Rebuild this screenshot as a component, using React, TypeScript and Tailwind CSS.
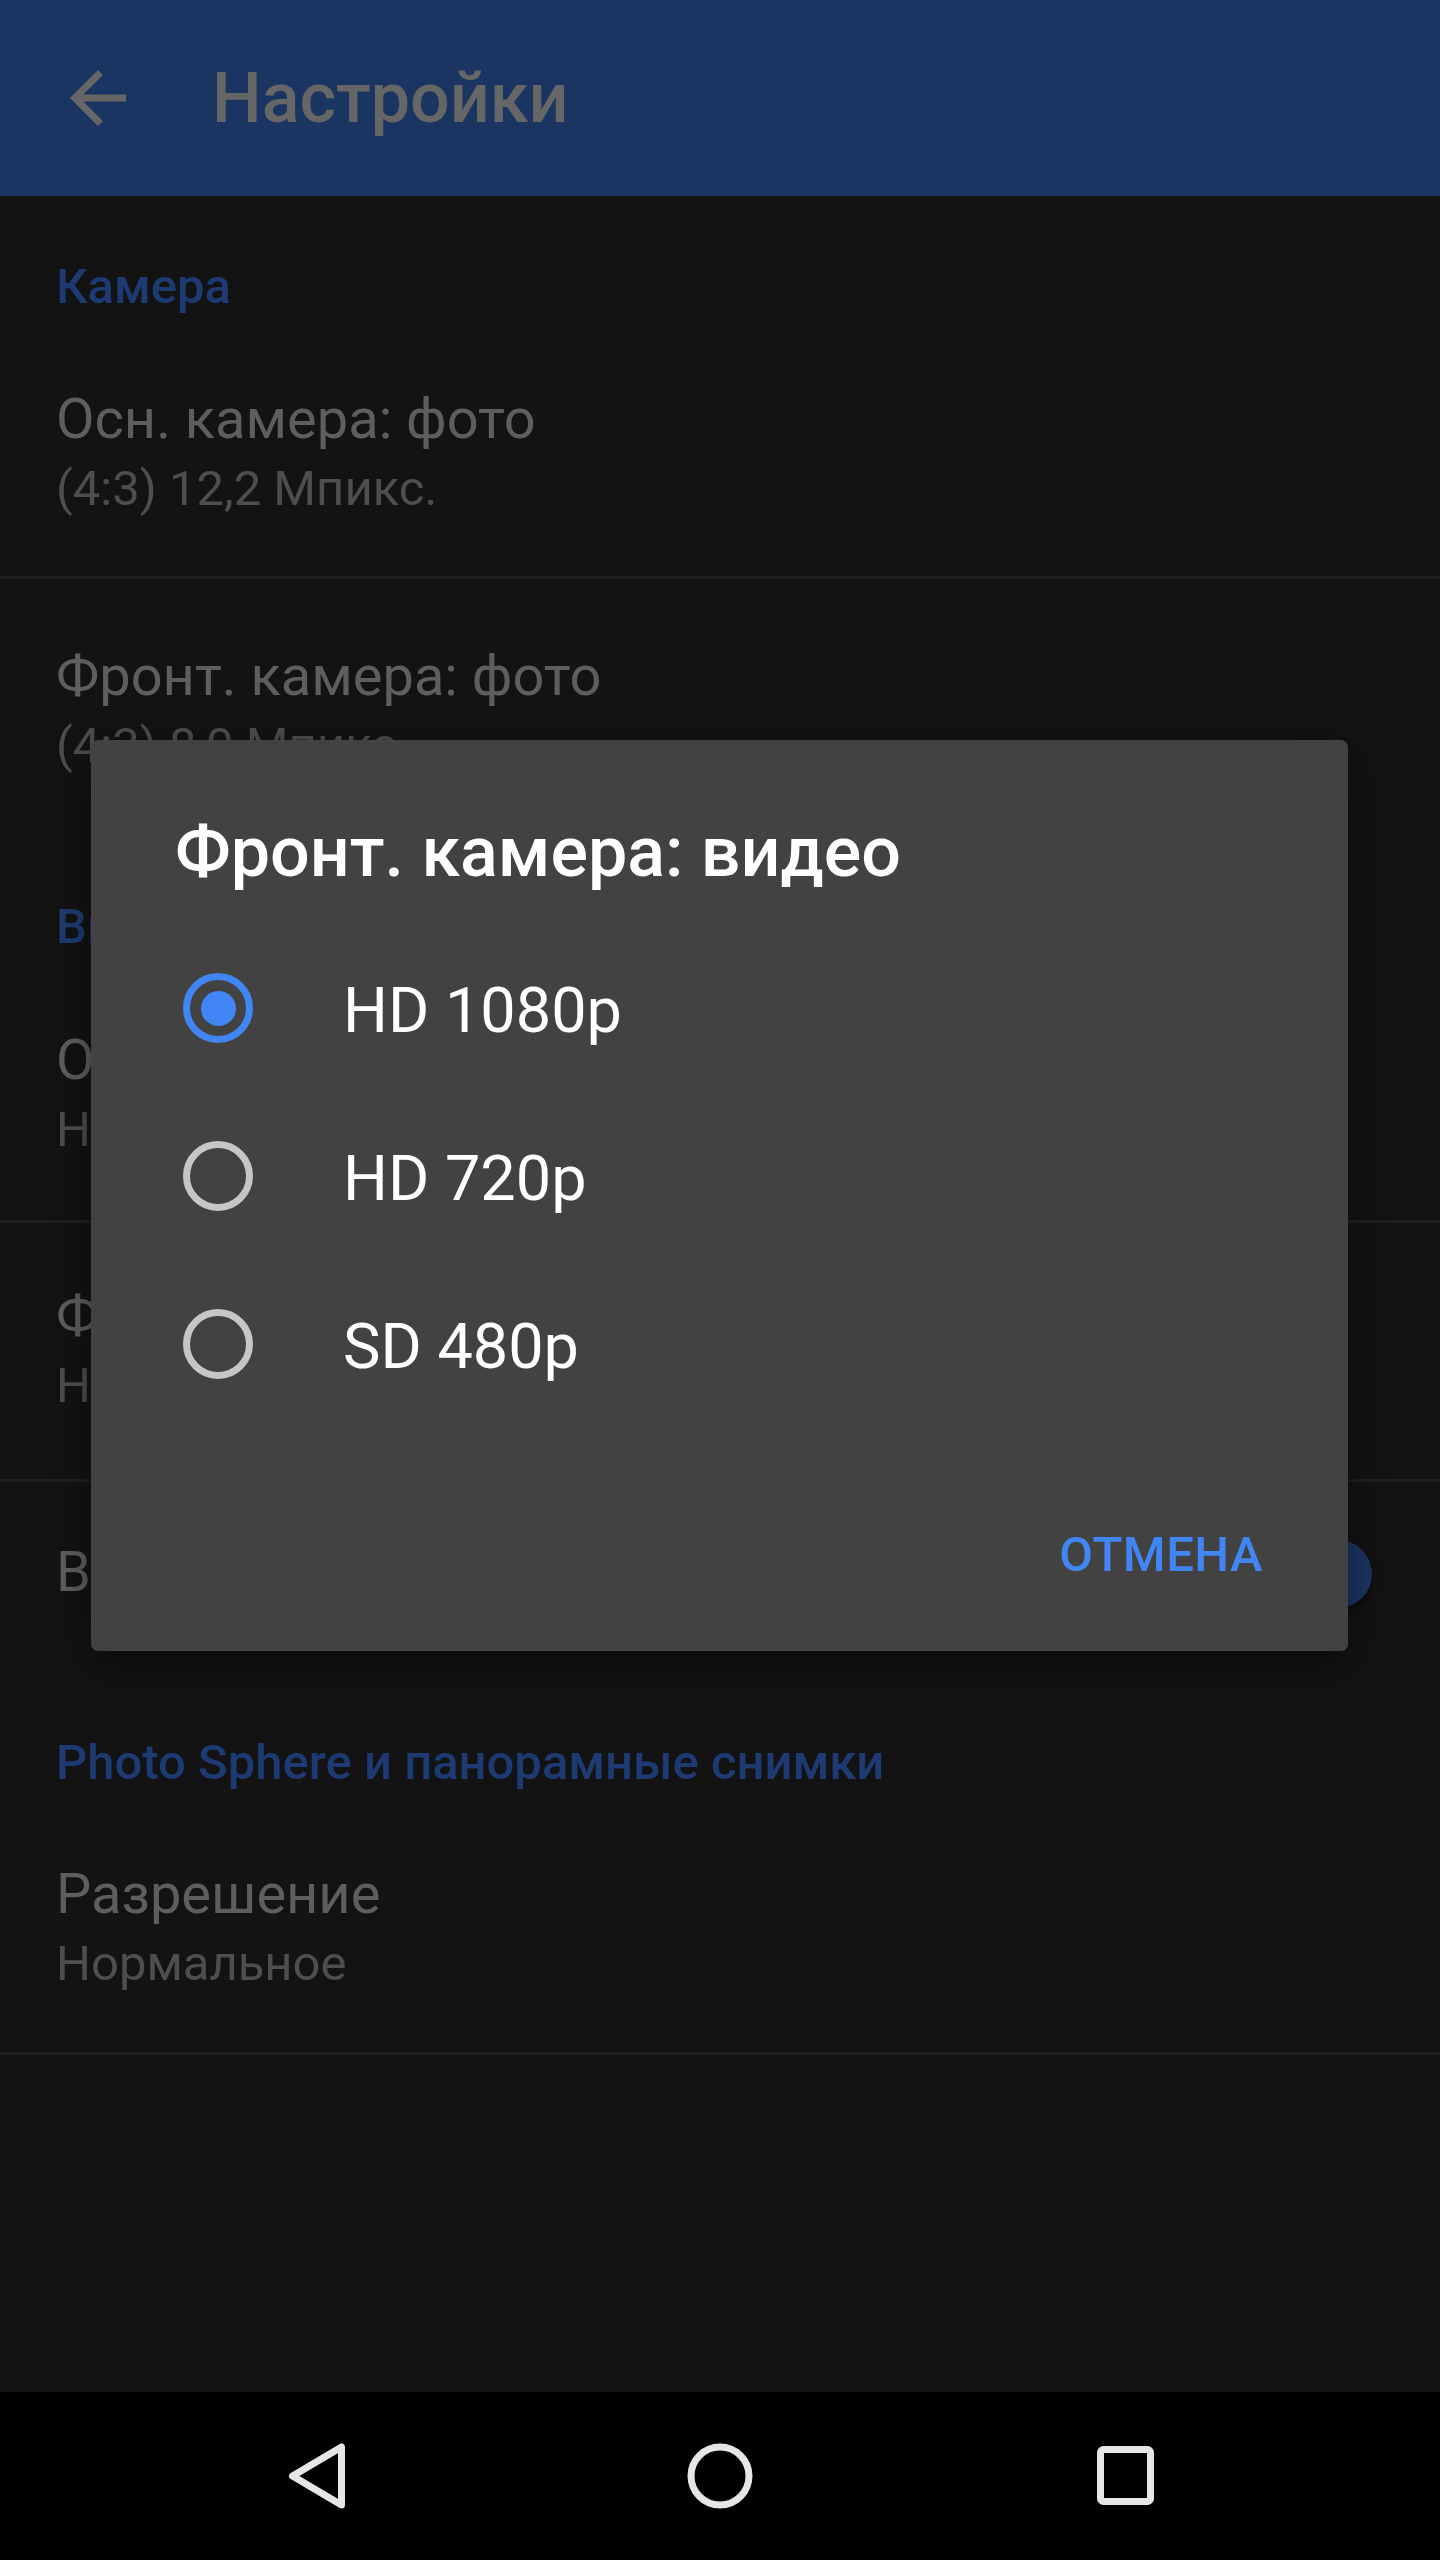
import React from "react";

function Radio({ on }: { on: boolean }) {
  return on ? (
    <div className="w-[70px] h-[70px] rounded-full border-[7px] border-[#4285f4] flex items-center justify-center shrink-0">
      <div className="w-[35px] h-[35px] rounded-full bg-[#4285f4]" />
    </div>
  ) : (
    <div className="w-[70px] h-[70px] rounded-full border-[7px] border-[#c6c6c6] shrink-0" />
  );
}

function Title({ children, mt }: { children: React.ReactNode; mt: string }) {
  return (
    <div className={`${mt} h-[70px] leading-[70px] px-[56px] text-[56px] text-[#5e5e5e] whitespace-nowrap`}>
      {children}
    </div>
  );
}

function Sub({ children }: { children: React.ReactNode }) {
  return (
    <div className="h-[70px] leading-[70px] px-[56px] text-[49px] text-[#4e4e4e] whitespace-nowrap">
      {children}
    </div>
  );
}

function Cat({ children, mt }: { children: React.ReactNode; mt: string }) {
  return (
    <div className={`${mt} h-[70px] leading-[70px] px-[56px] text-[49px] font-medium text-[#1d3b72] whitespace-nowrap`}>
      {children}
    </div>
  );
}

function Divider({ mt }: { mt: string }) {
  return <div className={`${mt} h-[3px] bg-[#1f1f1f] shrink-0`} />;
}

export default function App() {
  const options = [
    { label: "HD 1080p", on: true },
    { label: "HD 720p", on: false },
    { label: "SD 480p", on: false },
  ];
  return (
    <div className="relative w-[1440px] h-[2560px] bg-[#131313] flex flex-col overflow-hidden font-['Roboto',sans-serif]">
      <header className="h-[196px] shrink-0 bg-[#1b3562] flex items-center">
        <svg className="ml-[56px] w-[84px] h-[84px]" viewBox="0 0 24 24" fill="#666666">
          <path d="M20 11H7.83l5.59-5.59L12 4l-8 8 8 8 1.41-1.41L7.83 13H20v-2z" />
        </svg>
        <h1 className="ml-[72px] text-[70px] font-medium text-[#666666] leading-none">Настройки</h1>
      </header>

      <main className="flex-1 flex flex-col">
        <Cat mt="mt-[56px]">Камера</Cat>
        <Title mt="mt-[62px]">Осн. камера: фото</Title>
        <Sub>(4:3) 12,2 Мпикс.</Sub>
        <Divider mt="mt-[52px]" />
        <Title mt="mt-[62px]">Фронт. камера: фото</Title>
        <Sub>(4:3) 8,0 Мпикс.</Sub>

        <Cat mt="mt-[111px]">Видео</Cat>
        <Title mt="mt-[63px]">Осн. камера: видео</Title>
        <Sub>HD 1080p</Sub>
        <Divider mt="mt-[55px]" />
        <Title mt="mt-[58px]">Фронт. камера: видео</Title>
        <Sub>HD 1080p</Sub>
        <Divider mt="mt-[58px]" />
        <div className="mt-[55px] h-[70px] flex items-center justify-between pl-[56px] pr-[68px]">
          <span className="text-[56px] text-[#5e5e5e] whitespace-nowrap leading-[70px]">Видеостабилизация</span>
          <div className="w-[68px] h-[68px] rounded-full bg-[#1b3562] shadow-[0_3px_6px_rgba(0,0,0,0.5)] mt-[4px]" />
        </div>

        <Cat mt="mt-[121px]">Photo Sphere и панорамные снимки</Cat>
        <Title mt="mt-[61px]">Разрешение</Title>
        <Sub>Нормальное</Sub>
        <Divider mt="mt-[53px]" />
      </main>

      <nav className="h-[168px] shrink-0 bg-black flex items-center pl-[265px] gap-[305px]">
        <svg className="w-[100px] h-[100px]" viewBox="0 0 100 100" fill="none" stroke="#e6e6e6" strokeWidth="7" strokeLinejoin="round">
          <path d="M27.5 50 L76.5 21 L76.5 79 Z" />
        </svg>
        <svg className="w-[100px] h-[100px]" viewBox="0 0 100 100" fill="none" stroke="#e6e6e6" strokeWidth="7">
          <circle cx="50" cy="50" r="29" />
        </svg>
        <svg className="w-[100px] h-[100px]" viewBox="0 0 100 100" fill="none" stroke="#e6e6e6" strokeWidth="7">
          <rect x="25.5" y="23.5" width="50" height="52" rx="3" />
        </svg>
      </nav>

      <div className="absolute left-[91px] top-[740px] w-[1257px] h-[911px] rounded-[7px] bg-[#424242] shadow-[0_12px_40px_rgba(0,0,0,0.45)] flex flex-col">
        <div className="mt-[72px] pl-[84px] h-[80px] leading-[80px] text-[70px] font-medium text-white whitespace-nowrap">
          Фронт. камера: видео
        </div>
        <div className="mt-[32px] flex flex-col">
          {options.map((o) => (
            <div key={o.label} className="h-[168px] flex items-center pl-[92px] gap-[90px]">
              <Radio on={o.on} />
              <span className="mt-[4px] text-[63px] text-white leading-none whitespace-nowrap">{o.label}</span>
            </div>
          ))}
        </div>
        <div className="mt-[99px] flex justify-end pr-[85px]">
          <span className="h-[56px] leading-[56px] text-[49px] font-medium text-[#4285f4] tracking-[0.5px] whitespace-nowrap">
            ОТМЕНА
          </span>
        </div>
      </div>
    </div>
  );
}
